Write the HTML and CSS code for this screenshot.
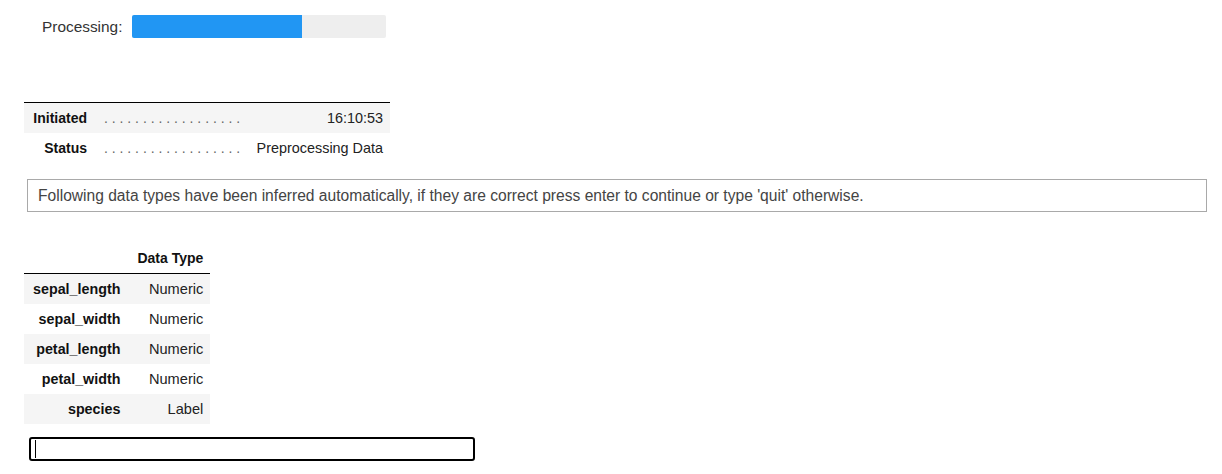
FILE: index.html
```html
<!DOCTYPE html>
<html>
<head>
<meta charset="utf-8">
<link rel="stylesheet" href="styles.css">
</head>
<body>
<div class="progress-row">
  <span class="progress-label">Processing:</span>
  <div class="progress-track"><div class="progress-fill" style="width:67%"></div></div>
</div>

<table class="status-table">
  <tbody>
    <tr class="odd"><th class="lbl">Initiated</th><td class="dots">. . . . . . . . . . . . . . . . . .</td><td class="val">16:10:53</td></tr>
    <tr><th class="lbl">Status</th><td class="dots">. . . . . . . . . . . . . . . . . .</td><td class="val">Preprocessing Data</td></tr>
  </tbody>
</table>

<div class="message">Following data types have been inferred automatically, if they are correct press enter to continue or type 'quit' otherwise.</div>

<table class="types-table">
  <thead>
    <tr><th class="idx"></th><th class="col">Data Type</th></tr>
  </thead>
  <tbody>
    <tr class="odd"><th class="idx">sepal_length</th><td class="col">Numeric</td></tr>
    <tr><th class="idx">sepal_width</th><td class="col">Numeric</td></tr>
    <tr class="odd"><th class="idx">petal_length</th><td class="col">Numeric</td></tr>
    <tr><th class="idx">petal_width</th><td class="col">Numeric</td></tr>
    <tr class="odd"><th class="idx">species</th><td class="col">Label</td></tr>
  </tbody>
</table>

<div class="input-box"><span class="caret"></span></div>
</body>
</html>
```

FILE: styles.css
```css
html, body {
  margin: 0;
  padding: 0;
  background: #fff;
  font-family: "Liberation Sans", Arial, sans-serif;
  color: #000;
}

.progress-row {
  display: flex;
  align-items: center;
  height: 23px;
  margin-top: 15px;
  padding-left: 42px;
}

.progress-label {
  font-size: 15.4px;
  color: #333;
  margin-right: 10px;
  width: 80px;
  white-space: nowrap;
}

.progress-track {
  width: 254px;
  height: 23px;
  background: #eeeeee;
  border-radius: 2px;
  overflow: hidden;
}

.progress-fill {
  height: 100%;
  background: #2196f3;
}

.status-table {
  margin-top: 64px;
  margin-left: 24px;
  border-collapse: collapse;
  border-spacing: 0;
  border-top: 1px solid #000;
  font-size: 14px;
  width: 366px;
}

.status-table tr {
  height: 30px;
}

.status-table tr.odd {
  background: #f5f5f5;
}

.status-table .lbl {
  font-weight: bold;
  font-size: 14px;
  text-align: right;
  padding: 0 0 0 8px;
  width: 55px;
  color: #111;
}

.status-table .dots {
  padding: 0 0 0 17px;
  color: #666;
  font-size: 14px;
  white-space: nowrap;
  text-align: left;
}

.status-table .val {
  text-align: right;
  padding: 0 7px 0 0;
  white-space: nowrap;
  font-size: 14.4px;
  color: #222;
}

.message {
  margin: 16px 15px 0 27px;
  height: 31px;
  border: 1px solid #a9a9a9;
  font-size: 15.6px;
  line-height: 31px;
  padding-left: 10px;
  color: #444;
  white-space: nowrap;
}

.types-table {
  margin-top: 32px;
  margin-left: 24px;
  border-collapse: collapse;
  border-spacing: 0;
  font-size: 14px;
}

.types-table thead tr {
  height: 30px;
  border-bottom: 1px solid #000;
}

.types-table tbody tr {
  height: 30px;
}

.types-table tr.odd {
  background: #f5f5f5;
}

.types-table .idx {
  font-weight: bold;
  font-size: 14.3px;
  text-align: right;
  padding: 0 10px 0 9px;
  color: #111;
}

.types-table th.col {
  font-weight: bold;
  text-align: right;
  padding: 0 7px 0 7px;
  color: #111;
}

.types-table td.col {
  text-align: right;
  padding: 0 7px 0 7px;
  font-size: 14.6px;
  color: #222;
}

.input-box {
  margin: 13px 0 0 29px;
  width: 438px;
  height: 20px;
  border: 2px solid #000;
  border-radius: 3px;
  display: flex;
  align-items: center;
  padding-left: 4px;
}

.caret {
  display: block;
  width: 1px;
  height: 18px;
  background: #000;
}
```
